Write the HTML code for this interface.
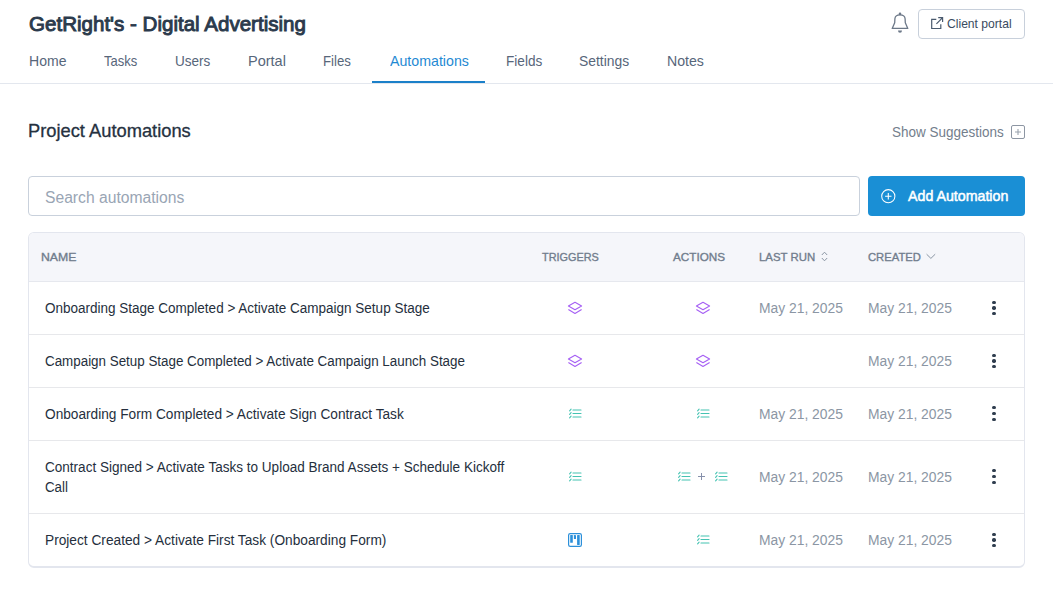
<!DOCTYPE html>
<html><head><meta charset="utf-8">
<style>
*{box-sizing:border-box;margin:0;padding:0}
html,body{width:1053px;height:603px;overflow:hidden;background:#fff;font-family:"Liberation Sans",sans-serif;}
.a{position:absolute;white-space:nowrap;line-height:1;transform-origin:0 0}
.kb i{position:absolute;left:0;width:3.4px;height:3.4px;border-radius:50%;background:#2f3d4e}
</style></head><body>

<div class="a" style="left:28.5px;top:12.82px;font-size:21px;color:#2b3a4c;transform:scaleX(0.9787);-webkit-text-stroke:0.95px #2b3a4c;">GetRight's - Digital Advertising</div>
<div class="a" style="left:28.56px;top:53.3px;font-size:15px;color:#57667a;transform:scaleX(0.9359);">Home</div>
<div class="a" style="left:104.3px;top:53.3px;font-size:15px;color:#57667a;transform:scaleX(0.8658);">Tasks</div>
<div class="a" style="left:174.8px;top:53.3px;font-size:15px;color:#57667a;transform:scaleX(0.9026);">Users</div>
<div class="a" style="left:247.53px;top:53.3px;font-size:15px;color:#57667a;transform:scaleX(0.9676);">Portal</div>
<div class="a" style="left:322.82px;top:53.3px;font-size:15px;color:#57667a;transform:scaleX(0.8806);">Files</div>
<div class="a" style="left:389.5px;top:53.3px;font-size:15px;color:#1f8ad3;transform:scaleX(0.9458);">Automations</div>
<div class="a" style="left:505.59px;top:53.3px;font-size:15px;color:#57667a;transform:scaleX(0.9077);">Fields</div>
<div class="a" style="left:579.48px;top:53.3px;font-size:15px;color:#57667a;transform:scaleX(0.9245);">Settings</div>
<div class="a" style="left:667.26px;top:53.3px;font-size:15px;color:#57667a;transform:scaleX(0.9421);">Notes</div>
<div class="a" style="left:947.2px;top:16.57px;font-size:13.5px;color:#3a4b60;transform:scaleX(0.8972);">Client portal</div>
<div class="a" style="left:0;top:83px;width:1053px;height:1px;background:#e3e7ee"></div>
<div class="a" style="left:372px;top:81px;width:113px;height:2px;background:#1b80c9"></div>
<svg class="a" style="left:885px;top:8px" width="30" height="30" viewBox="0 0 30 30"><path d="M7.2 20.4 L9.7 14.8 L9.9 10.8 C10.1 8.2 12.2 6.9 15 6.9 C17.8 6.9 19.9 8.2 20.1 10.8 L20.3 14.8 L22.8 20.4 Z" fill="none" stroke="#6c7888" stroke-width="1.3" stroke-linejoin="round"/><circle cx="15" cy="5.9" r="1.3" fill="#6c7888"/><path d="M13 22.4 H17 Q17 24.7 15 24.7 Q13 24.7 13 22.4Z" fill="#6c7888"/></svg>
<div class="a" style="left:918px;top:9px;width:107px;height:30px;border:1px solid #c8d0db;border-radius:4px"></div>
<svg class="a" style="left:930px;top:16px" width="14" height="14" viewBox="0 0 14 14"><path d="M6.3 3.4 H1.7 V12.5 H10.8 V8.2" fill="none" stroke="#4a5a6e" stroke-width="1.2"/><path d="M8.2 1.6 H12.6 V6 M12.4 1.8 L6.4 7.8" fill="none" stroke="#4a5a6e" stroke-width="1.2"/></svg>
<div class="a" style="left:1011px;top:125px;width:14px;height:14px;border:1px solid #8d96a3;border-radius:2px"><svg style="position:absolute;left:2px;top:2px" width="8" height="8" viewBox="0 0 8 8"><path d="M4 1V7M1 4H7" stroke="#9aa3ae" stroke-width="1.1"/></svg></div>
<div class="a" style="left:28px;top:176px;width:832px;height:40px;border:1px solid #c9d1dc;border-radius:4px"></div>
<div class="a" style="left:868px;top:176px;width:157px;height:40px;background:#1a8fd5;border-radius:4px"></div>
<svg class="a" style="left:880px;top:188px" width="16" height="16" viewBox="0 0 16 16"><circle cx="8.3" cy="8.2" r="6.6" fill="none" stroke="#fff" stroke-width="1.05"/><path d="M8.3 5V11.4M5.1 8.2H11.5" stroke="#fff" stroke-width="1.1"/></svg>

<div class="a" style="left:28.41px;top:122.14px;font-size:18.5px;color:#25313f;transform:scaleX(0.989);-webkit-text-stroke:0.3px #25313f;">Project Automations</div>
<div class="a" style="left:891.6px;top:124.1px;font-size:15px;color:#737e8c;transform:scaleX(0.8984);">Show Suggestions</div>
<div class="a" style="left:44.52px;top:190.46px;font-size:16px;color:#99a5b4;transform:scaleX(0.9787);">Search automations</div>
<div class="a" style="left:907.6px;top:188.0px;font-size:15px;color:#fff;transform:scaleX(0.9472);-webkit-text-stroke:0.5px #fff;">Add Automation</div>
<div class="a" style="left:28px;top:232px;width:997px;height:336px;border:1px solid #e3e6ee;border-bottom-width:2px;border-radius:6px;overflow:hidden">
<div class="a" style="left:0;top:0;width:995px;height:49px;background:#f5f6fa;border-bottom:1px solid #e6e8ee"></div>
<div class="a" style="left:12.4px;top:18.97px;font-size:11.5px;color:#717d8d;transform:scaleX(1.0667);-webkit-text-stroke:0.35px #717d8d;">NAME</div>
<div class="a" style="left:513.4px;top:18.97px;font-size:11.5px;color:#717d8d;transform:scaleX(0.9467);-webkit-text-stroke:0.35px #717d8d;">TRIGGERS</div>
<div class="a" style="left:643.6px;top:18.97px;font-size:11.5px;color:#717d8d;transform:scaleX(1.0176);-webkit-text-stroke:0.35px #717d8d;">ACTIONS</div>
<div class="a" style="left:729.5px;top:18.97px;font-size:11.5px;color:#717d8d;transform:scaleX(0.9911);-webkit-text-stroke:0.35px #717d8d;">LAST RUN</div>
<div class="a" style="left:839.2px;top:18.97px;font-size:11.5px;color:#717d8d;transform:scaleX(0.9778);-webkit-text-stroke:0.35px #717d8d;">CREATED</div>
<svg class="a" style="left:792px;top:18px" width="7" height="11" viewBox="0 0 7 11"><path d="M0.8 4 L3.5 1.2 L6.2 4 M0.8 7 L3.5 9.8 L6.2 7" fill="none" stroke="#8a95a3" stroke-width="1"/></svg>
<svg class="a" style="left:897px;top:19.5px" width="11" height="8" viewBox="0 0 11 8"><path d="M0.6 1.2 L4.9 5.4 L9.2 1.2" fill="none" stroke="#8a95a3" stroke-width="1"/></svg>
<div class="a" style="left:0;top:49px;width:995px;height:53px;border-bottom:1px solid #e7e8eb;">
<div class="a" style="left:16.2px;top:19.05px;font-size:14px;color:#252f3d;transform:scaleX(0.9644);">Onboarding Stage Completed &gt; Activate Campaign Setup Stage</div>
<svg class="a" style="left:538.0px;top:19.4px" width="16" height="14" viewBox="0 0 16 14"><path d="M8 1.2 L14.6 5 L8 8.8 L1.4 5 Z" fill="none" stroke="#a660f4" stroke-width="1.1" stroke-linejoin="round"/><path d="M1.4 8.5 L8 12.5 L14.6 8.5" fill="none" stroke="#a660f4" stroke-width="1.1" stroke-linejoin="round"/></svg>
<svg class="a" style="left:666.0px;top:19.4px" width="16" height="14" viewBox="0 0 16 14"><path d="M8 1.2 L14.6 5 L8 8.8 L1.4 5 Z" fill="none" stroke="#a660f4" stroke-width="1.1" stroke-linejoin="round"/><path d="M1.4 8.5 L8 12.5 L14.6 8.5" fill="none" stroke="#a660f4" stroke-width="1.1" stroke-linejoin="round"/></svg>
<div class="a" style="left:729.91px;top:19.05px;font-size:14px;color:#8b96a4;transform:scaleX(0.9893);">May 21, 2025</div>
<div class="a" style="left:839.11px;top:19.05px;font-size:14px;color:#8b96a4;transform:scaleX(0.9893);">May 21, 2025</div>
<div class="a kb" style="left:963.2px;top:18.5px"><i style="top:0"></i><i style="top:5.75px"></i><i style="top:11.5px"></i></div>
</div>
<div class="a" style="left:0;top:102px;width:995px;height:53px;border-bottom:1px solid #e7e8eb;">
<div class="a" style="left:16.2px;top:18.95px;font-size:14px;color:#252f3d;transform:scaleX(0.9558);">Campaign Setup Stage Completed &gt; Activate Campaign Launch Stage</div>
<svg class="a" style="left:538.0px;top:19.4px" width="16" height="14" viewBox="0 0 16 14"><path d="M8 1.2 L14.6 5 L8 8.8 L1.4 5 Z" fill="none" stroke="#a660f4" stroke-width="1.1" stroke-linejoin="round"/><path d="M1.4 8.5 L8 12.5 L14.6 8.5" fill="none" stroke="#a660f4" stroke-width="1.1" stroke-linejoin="round"/></svg>
<svg class="a" style="left:666.0px;top:19.4px" width="16" height="14" viewBox="0 0 16 14"><path d="M8 1.2 L14.6 5 L8 8.8 L1.4 5 Z" fill="none" stroke="#a660f4" stroke-width="1.1" stroke-linejoin="round"/><path d="M1.4 8.5 L8 12.5 L14.6 8.5" fill="none" stroke="#a660f4" stroke-width="1.1" stroke-linejoin="round"/></svg>
<div class="a" style="left:839.11px;top:18.95px;font-size:14px;color:#8b96a4;transform:scaleX(0.9893);">May 21, 2025</div>
<div class="a kb" style="left:963.2px;top:18.5px"><i style="top:0"></i><i style="top:5.75px"></i><i style="top:11.5px"></i></div>
</div>
<div class="a" style="left:0;top:155px;width:995px;height:53px;border-bottom:1px solid #e7e8eb;">
<div class="a" style="left:16.2px;top:18.95px;font-size:14px;color:#252f3d;transform:scaleX(0.9764);">Onboarding Form Completed &gt; Activate Sign Contract Task</div>
<svg class="a" style="left:539.0px;top:19.5px" width="14" height="12" viewBox="0 0 14 12"><path d="M5 2H13M5 5.5H13M5 9H13" stroke="#45c3b2" stroke-width="1.15" stroke-linecap="round"/><path d="M1.6 2.9 L3.1 1.1 M1.6 6.4 L3.1 4.6 M1.6 9.9 L3.1 8.1" stroke="#45c3b2" stroke-width="1.1" stroke-linecap="round"/></svg>
<svg class="a" style="left:667.0px;top:19.5px" width="14" height="12" viewBox="0 0 14 12"><path d="M5 2H13M5 5.5H13M5 9H13" stroke="#45c3b2" stroke-width="1.15" stroke-linecap="round"/><path d="M1.6 2.9 L3.1 1.1 M1.6 6.4 L3.1 4.6 M1.6 9.9 L3.1 8.1" stroke="#45c3b2" stroke-width="1.1" stroke-linecap="round"/></svg>
<div class="a" style="left:729.91px;top:18.95px;font-size:14px;color:#8b96a4;transform:scaleX(0.9893);">May 21, 2025</div>
<div class="a" style="left:839.11px;top:18.95px;font-size:14px;color:#8b96a4;transform:scaleX(0.9893);">May 21, 2025</div>
<div class="a kb" style="left:963.2px;top:18.0px"><i style="top:0"></i><i style="top:5.75px"></i><i style="top:11.5px"></i></div>
</div>
<div class="a" style="left:0;top:208px;width:995px;height:73px;border-bottom:1px solid #e7e8eb;">
<div class="a" style="left:16.2px;top:19.45px;font-size:14px;color:#252f3d;transform:scaleX(0.9669);">Contract Signed &gt; Activate Tasks to Upload Brand Assets + Schedule Kickoff</div>
<div class="a" style="left:16.2px;top:39.45px;font-size:14px;color:#252f3d;transform:scaleX(0.95);">Call</div>
<svg class="a" style="left:539.0px;top:29.5px" width="14" height="12" viewBox="0 0 14 12"><path d="M5 2H13M5 5.5H13M5 9H13" stroke="#45c3b2" stroke-width="1.15" stroke-linecap="round"/><path d="M1.6 2.9 L3.1 1.1 M1.6 6.4 L3.1 4.6 M1.6 9.9 L3.1 8.1" stroke="#45c3b2" stroke-width="1.1" stroke-linecap="round"/></svg>
<svg class="a" style="left:648.0px;top:29.5px" width="14" height="12" viewBox="0 0 14 12"><path d="M5 2H13M5 5.5H13M5 9H13" stroke="#45c3b2" stroke-width="1.15" stroke-linecap="round"/><path d="M1.6 2.9 L3.1 1.1 M1.6 6.4 L3.1 4.6 M1.6 9.9 L3.1 8.1" stroke="#45c3b2" stroke-width="1.1" stroke-linecap="round"/></svg>
<svg class="a" style="left:668px;top:31.0px" width="9" height="9" viewBox="0 0 9 9"><path d="M4.5 1V8M1 4.5H8" stroke="#8690ab" stroke-width="1"/></svg>
<svg class="a" style="left:685.0px;top:29.5px" width="14" height="12" viewBox="0 0 14 12"><path d="M5 2H13M5 5.5H13M5 9H13" stroke="#45c3b2" stroke-width="1.15" stroke-linecap="round"/><path d="M1.6 2.9 L3.1 1.1 M1.6 6.4 L3.1 4.6 M1.6 9.9 L3.1 8.1" stroke="#45c3b2" stroke-width="1.1" stroke-linecap="round"/></svg>
<div class="a" style="left:729.91px;top:29.45px;font-size:14px;color:#8b96a4;transform:scaleX(0.9893);">May 21, 2025</div>
<div class="a" style="left:839.11px;top:29.45px;font-size:14px;color:#8b96a4;transform:scaleX(0.9893);">May 21, 2025</div>
<div class="a kb" style="left:963.2px;top:28.0px"><i style="top:0"></i><i style="top:5.75px"></i><i style="top:11.5px"></i></div>
</div>
<div class="a" style="left:0;top:281px;width:995px;height:52px;">
<div class="a" style="left:16.2px;top:19.35px;font-size:14px;color:#252f3d;transform:scaleX(0.979);">Project Created &gt; Activate First Task (Onboarding Form)</div>
<svg class="a" style="left:538.0px;top:18.0px" width="16" height="16" viewBox="0 0 16 16"><rect x="1.6" y="1.6" width="12.8" height="12.8" rx="1.6" fill="none" stroke="#2c90da" stroke-width="1.2"/><rect x="3.2" y="3.1" width="2.6" height="7.6" rx="0.5" fill="#2c90da"/><rect x="6.9" y="3.1" width="2.1" height="4" rx="0.4" fill="#2c90da"/><rect x="10.1" y="3.1" width="2.6" height="9.8" rx="0.5" fill="#2c90da"/></svg>
<svg class="a" style="left:667.0px;top:20.0px" width="14" height="12" viewBox="0 0 14 12"><path d="M5 2H13M5 5.5H13M5 9H13" stroke="#45c3b2" stroke-width="1.15" stroke-linecap="round"/><path d="M1.6 2.9 L3.1 1.1 M1.6 6.4 L3.1 4.6 M1.6 9.9 L3.1 8.1" stroke="#45c3b2" stroke-width="1.1" stroke-linecap="round"/></svg>
<div class="a" style="left:729.91px;top:19.35px;font-size:14px;color:#8b96a4;transform:scaleX(0.9893);">May 21, 2025</div>
<div class="a" style="left:839.11px;top:19.35px;font-size:14px;color:#8b96a4;transform:scaleX(0.9893);">May 21, 2025</div>
<div class="a kb" style="left:963.2px;top:18.5px"><i style="top:0"></i><i style="top:5.75px"></i><i style="top:11.5px"></i></div>
</div>
</div>
</body></html>
